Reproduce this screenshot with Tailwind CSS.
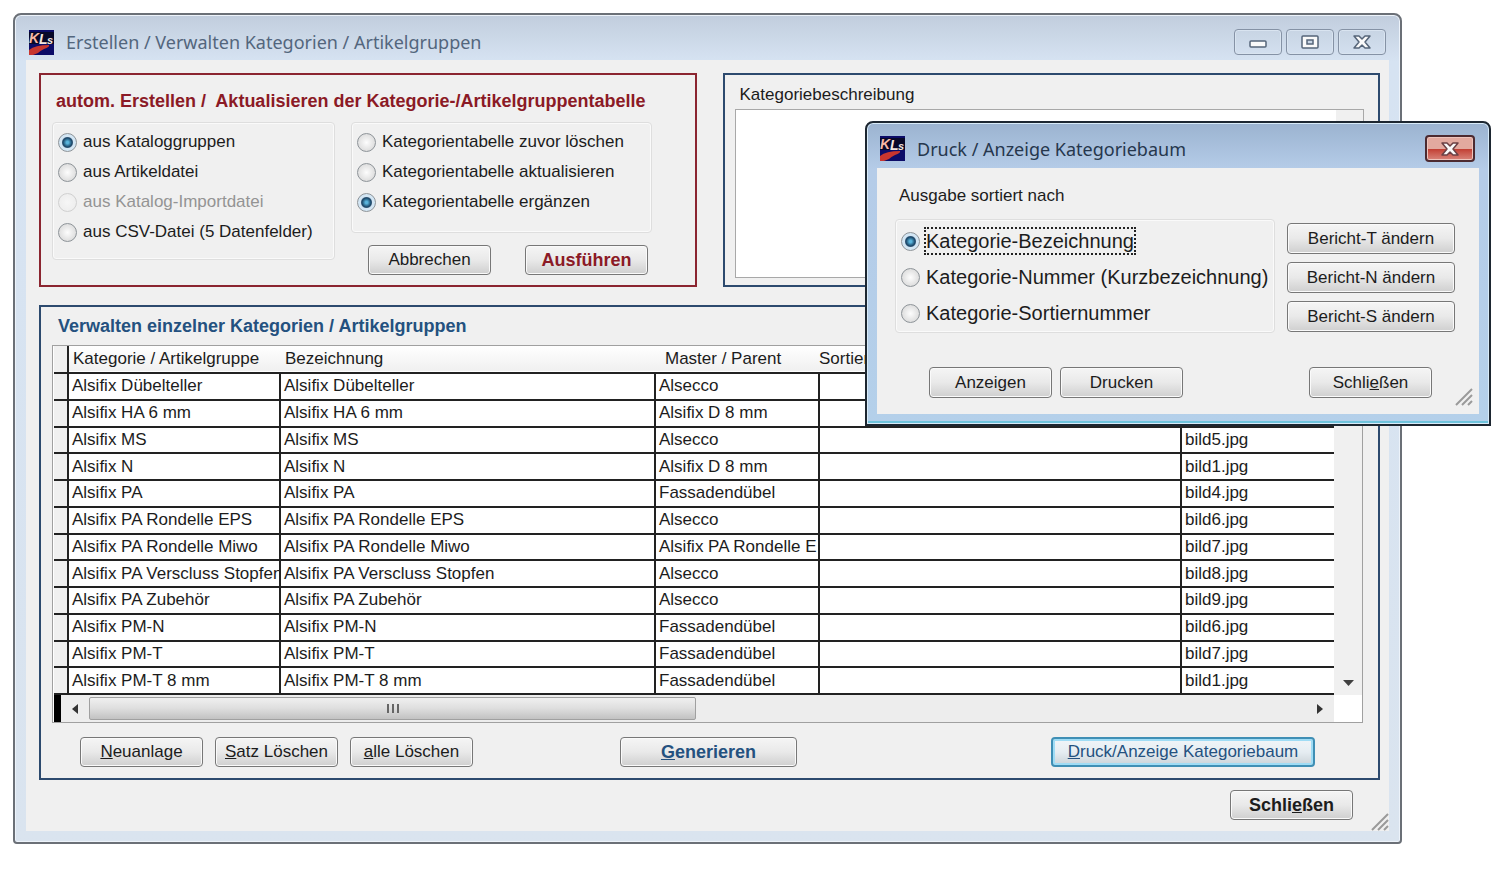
<!DOCTYPE html>
<html lang="de">

<head>
    <meta charset="UTF-8" />
    <meta name="viewport" content="width=device-width, initial-scale=1.0" />
    <title>Erstellen / Verwalten Kategorien / Artikelgruppen</title>
    <script src="https://cdn.jsdelivr.net/npm/@tailwindcss/browser@4"></script>
</head>

<body class="relative min-h-screen bg-white font-['Liberation_Sans',Arial,sans-serif] text-[17px] leading-5 text-[#1c1c1c]">

    <svg class="hidden">
        <symbol id="logo" viewBox="0 0 25 25">
            <rect width="25" height="25" fill="#0c0c68" />
            <path d="M0 2 H25 V14 H0 Z" fill="#080828" />
            <path d="M0 25 V20 Q6 15 20 15 Q21 17 15 19 Q11 21 9 23 L4 25 Z" fill="#c8362f" />
            <text x="0" y="13" font-family="Liberation Sans" font-size="14" font-weight="bold" font-style="italic" fill="#f8b8a4">K</text>
            <text x="10" y="14" font-family="Liberation Sans" font-size="14" font-weight="bold" font-style="italic" fill="#f4e6e0">L</text>
            <text x="18" y="14" font-family="Liberation Sans" font-size="11" font-weight="bold" font-style="italic" fill="#f4e6e0">s</text>
        </symbol>
        <symbol id="cross" viewBox="0 0 20 16">
            <path d="M2 2 H7 L10 5 L13 2 H18 L13 8 L18 14 H13 L10 11 L7 14 H2 L7 8 Z" fill="#fafafa" stroke="currentColor" stroke-width="1.500" stroke-linejoin="round" />
        </symbol>
        <symbol id="grip" viewBox="0 0 18 18">
            <path d="M1 17 L17 1 M7 17 L17 7 M13 17 L17 13" stroke="#9a9a9a" stroke-width="2" />
        </symbol>
    </svg>

    <!-- Main window -->
    <main class="absolute left-[13px] right-[110px] top-[13px] rounded-t-lg rounded-b-sm border-2 border-[#6b7077] bg-linear-to-b from-[#c1cddd] via-[#d6e3f2] via-[46px] to-[#dae4ef] px-[11px] pb-[11px] shadow-[inset_0_0_0_1px_#edf3fa]">
        <header class="flex h-[45px] items-center pt-[9px] font-['Noto_Sans','Open_Sans',sans-serif]">
            <svg class="ml-[3px] h-[25px] w-[25px]"><use href="#logo" /></svg>
            <h1 class="ml-3 grow text-[18px] text-[#53667d]">Erstellen / Verwalten Kategorien / Artikelgruppen</h1>
            <div class="flex gap-1 pr-[3px] text-[#566579]">
                <button aria-label="Minimieren" class="flex h-[26px] w-12 items-center justify-center rounded-sm border border-[#8592a5] shadow-[inset_0_0_0_1px_#d9e4f0]">
                    <svg class="h-4 w-5" viewBox="0 0 20 16"><rect x="2" y="7" width="16" height="6" rx="1" fill="#fafafa" stroke="currentColor" stroke-width="1.500" /></svg>
                </button>
                <button aria-label="Maximieren" class="flex h-[26px] w-12 items-center justify-center rounded-sm border border-[#8592a5] shadow-[inset_0_0_0_1px_#d9e4f0]">
                    <svg class="h-4 w-5" viewBox="0 0 20 16" fill="#fafafa" stroke="currentColor" stroke-width="1.500"><rect x="2" y="2" width="16" height="12" rx="1" /><rect x="7" y="6" width="6" height="4" fill="#c9d6e6" /></svg>
                </button>
                <button aria-label="Schließen" class="flex h-[26px] w-12 items-center justify-center rounded-sm border border-[#8592a5] shadow-[inset_0_0_0_1px_#d9e4f0]">
                    <svg class="h-4 w-5"><use href="#cross" /></svg>
                </button>
            </div>
        </header>

        <div class="relative bg-[#f0f0f0] pb-[11px] pl-[13px] pr-[9px] pt-[13px]">
            <div class="grid grid-cols-2 gap-[26px]">
                <!-- Automatic creation -->
                <section class="h-[214px] border-2 border-[#8b2530] pl-[11px] pt-4">
                    <h2 class="whitespace-pre pl-1 text-[18px] font-bold text-[#8b1a26]">autom. Erstellen /  Aktualisieren der Kategorie-/Artikelgruppentabelle</h2>
                    <div class="mt-[11px] flex gap-4">
                        <fieldset class="flex h-[138px] w-[283px] flex-col gap-[10px] rounded-sm border border-[#dedede] pl-[5px] pt-[9px] shadow-[inset_0_0_0_1px_#fafafa]">
                            <label class="flex items-center gap-[6px]"><input type="radio" name="quelle" checked class="h-[19px] w-[19px] shrink-0 appearance-none rounded-full border border-[#8e9499] bg-radial from-[#fdfdfd] to-[#d2d2d2] checked:from-[#59b4dc] checked:from-10% checked:via-[#163f60] checked:via-40% checked:to-[#d3e6f4] checked:to-50%" />aus Kataloggruppen</label>
                            <label class="flex items-center gap-[6px]"><input type="radio" name="quelle" class="h-[19px] w-[19px] shrink-0 appearance-none rounded-full border border-[#8e9499] bg-radial from-[#fdfdfd] to-[#d2d2d2] checked:from-[#59b4dc] checked:from-10% checked:via-[#163f60] checked:via-40% checked:to-[#d3e6f4] checked:to-50%" />aus Artikeldatei</label>
                            <label class="flex items-center gap-[6px] text-[#949494]"><input type="radio" name="quelle" disabled class="h-[19px] w-[19px] shrink-0 appearance-none rounded-full border border-[#d0d0d0] bg-radial from-[#f6f6f6] to-[#ebebeb]" />aus Katalog-Importdatei</label>
                            <label class="flex items-center gap-[6px]"><input type="radio" name="quelle" class="h-[19px] w-[19px] shrink-0 appearance-none rounded-full border border-[#8e9499] bg-radial from-[#fdfdfd] to-[#d2d2d2] checked:from-[#59b4dc] checked:from-10% checked:via-[#163f60] checked:via-40% checked:to-[#d3e6f4] checked:to-50%" />aus CSV-Datei (5 Datenfelder)</label>
                        </fieldset>
                        <div>
                            <fieldset class="flex h-[111px] w-[301px] flex-col gap-[10px] rounded-sm border border-[#dedede] pl-[5px] pt-[9px] shadow-[inset_0_0_0_1px_#fafafa]">
                                <label class="flex items-center gap-[6px]"><input type="radio" name="modus" class="h-[19px] w-[19px] shrink-0 appearance-none rounded-full border border-[#8e9499] bg-radial from-[#fdfdfd] to-[#d2d2d2] checked:from-[#59b4dc] checked:from-10% checked:via-[#163f60] checked:via-40% checked:to-[#d3e6f4] checked:to-50%" />Kategorientabelle zuvor löschen</label>
                                <label class="flex items-center gap-[6px]"><input type="radio" name="modus" class="h-[19px] w-[19px] shrink-0 appearance-none rounded-full border border-[#8e9499] bg-radial from-[#fdfdfd] to-[#d2d2d2] checked:from-[#59b4dc] checked:from-10% checked:via-[#163f60] checked:via-40% checked:to-[#d3e6f4] checked:to-50%" />Kategorientabelle aktualisieren</label>
                                <label class="flex items-center gap-[6px]"><input type="radio" name="modus" checked class="h-[19px] w-[19px] shrink-0 appearance-none rounded-full border border-[#8e9499] bg-radial from-[#fdfdfd] to-[#d2d2d2] checked:from-[#59b4dc] checked:from-10% checked:via-[#163f60] checked:via-40% checked:to-[#d3e6f4] checked:to-50%" />Kategorientabelle ergänzen</label>
                            </fieldset>
                            <div class="mt-3 flex justify-between pl-[17px] pr-1">
                                <button class="h-[30px] w-[123px] rounded-sm border border-[#777] bg-linear-to-b from-[#f5f5f5] via-[#e9e9e9] via-50% to-[#cfcfcf] shadow-[inset_0_0_0_1px_#fafafa]">Abbrechen</button>
                                <button class="h-[30px] w-[123px] rounded-sm border border-[#777] bg-linear-to-b from-[#f5f5f5] via-[#e9e9e9] via-50% to-[#cfcfcf] text-[18px] font-bold text-[#8b1a26] shadow-[inset_0_0_0_1px_#fafafa]">Ausführen</button>
                            </div>
                        </div>
                    </div>
                </section>

                <!-- Description -->
                <section class="flex h-[214px] flex-col border-2 border-[#2d4a6e] pb-[7px] pl-[10px] pr-[14px] pt-[10px]">
                    <label for="beschreibung" class="mb-1 pl-[5px]">Kategoriebeschreibung</label>
                    <div class="flex grow border border-[#a8a8a8] bg-white">
                        <textarea id="beschreibung" class="grow resize-none outline-none"></textarea>
                        <div class="w-[27px] bg-[#f0f0f0]"></div>
                    </div>
                </section>
            </div>

            <!-- Category list -->
            <section class="mt-[18px] border-2 border-[#2d4a6e] pb-[11px] pl-[11px] pr-[15px] pt-[9px]">
                <h2 class="mb-[9px] pl-[6px] text-[18px] font-bold text-[#24517f]">Verwalten einzelner Kategorien / Artikelgruppen</h2>
                <div class="border border-[#a0a0a0] bg-white pl-px">
                    <div class="flex">
                        <div class="min-w-0 grow">
                            <table class="h-[349px] w-full table-fixed border-collapse text-left">
                                <colgroup>
                                    <col class="w-[14px]" />
                                    <col class="w-[212px]" />
                                    <col class="w-[375px]" />
                                    <col class="w-[164px]" />
                                    <col />
                                    <col class="w-[153px]" />
                                </colgroup>
                                <thead>
                                    <tr class="h-[27px] border-b-2 border-[#222] bg-linear-to-b from-white to-[#f0f0f0]">
                                        <th class="border-r-2 border-[#222] bg-[#f0f0f0] p-0"></th>
                                        <th class="p-0 pl-1 font-normal">Kategorie / Artikelgruppe</th>
                                        <th class="p-0 pl-[5px] font-normal">Bezeichnung</th>
                                        <th class="p-0 pl-[10px] font-normal">Master / Parent</th>
                                        <th class="p-0 font-normal">Sortiernummer</th>
                                        <th class="p-0 pl-1 font-normal">Bild</th>
                                    </tr>
                                </thead>
                                <tbody id="rows"></tbody>
                            </table>
                        </div>
                        <div class="flex w-[28px] shrink-0 flex-col justify-end bg-[#f0f0f0]">
                            <button aria-label="Nach unten" class="flex h-[24px] items-center justify-center"><svg class="h-[6px] w-[11px]" viewBox="0 0 11 6"><path d="M0 0 H11 L5.500 6 Z" fill="#404040" /></svg></button>
                        </div>
                    </div>
                    <div class="flex h-[27px] items-center bg-[#ededed]">
                        <div class="h-full w-[7px] bg-black"></div>
                        <button aria-label="Nach links" class="flex h-full w-[28px] items-center justify-center"><svg class="h-[10px] w-[6px]" viewBox="0 0 6 10"><path d="M6 0 V10 L0 5 Z" fill="#333" /></svg></button>
                        <div class="flex h-[23px] w-[607px] items-center justify-center gap-[3px] rounded-xs border border-[#a0a0a0] bg-linear-to-b from-[#f0f0f0] via-[#dedede] to-[#c2c2c2]">
                            <i class="h-[9px] w-[2px] bg-[#666]"></i><i class="h-[9px] w-[2px] bg-[#666]"></i><i class="h-[9px] w-[2px] bg-[#666]"></i>
                        </div>
                        <div class="grow"></div>
                        <button aria-label="Nach rechts" class="flex h-full w-[28px] items-center justify-center"><svg class="h-[10px] w-[6px]" viewBox="0 0 6 10"><path d="M0 0 V10 L6 5 Z" fill="#333" /></svg></button>
                        <div class="h-full w-[28px] bg-white"></div>
                    </div>
                </div>
                <div class="mt-[14px] flex items-center pl-7 pr-12">
                    <div class="flex gap-3">
                        <button class="h-[30px] w-[123px] rounded-sm border border-[#777] bg-linear-to-b from-[#f5f5f5] via-[#e9e9e9] via-50% to-[#cfcfcf] shadow-[inset_0_0_0_1px_#fafafa]"><u>N</u>euanlage</button>
                        <button class="h-[30px] w-[123px] rounded-sm border border-[#777] bg-linear-to-b from-[#f5f5f5] via-[#e9e9e9] via-50% to-[#cfcfcf] shadow-[inset_0_0_0_1px_#fafafa]"><u>S</u>atz Löschen</button>
                        <button class="h-[30px] w-[123px] rounded-sm border border-[#777] bg-linear-to-b from-[#f5f5f5] via-[#e9e9e9] via-50% to-[#cfcfcf] shadow-[inset_0_0_0_1px_#fafafa]"><u>a</u>lle Löschen</button>
                    </div>
                    <button class="ml-[147px] h-[30px] w-[177px] rounded-sm border border-[#777] bg-linear-to-b from-[#f5f5f5] via-[#e9e9e9] via-50% to-[#cfcfcf] text-[18px] font-bold text-[#24517f] shadow-[inset_0_0_0_1px_#fafafa]"><u>G</u>enerieren</button>
                    <button class="ml-auto h-[30px] w-[264px] rounded-sm border-2 border-[#3f8fb5] bg-linear-to-b from-[#f0f5f8] via-[#e6edf2] via-50% to-[#cbd3d8] text-[#24517f] shadow-[inset_0_0_0_2px_#9fdcf5]"><u>D</u>ruck/Anzeige Kategoriebaum</button>
                </div>
            </section>

            <div class="mt-[10px] flex justify-end pr-[27px]">
                <button class="h-[30px] w-[123px] rounded-sm border border-[#777] bg-linear-to-b from-[#f5f5f5] via-[#e9e9e9] via-50% to-[#cfcfcf] text-[18px] font-bold shadow-[inset_0_0_0_1px_#fafafa]">Schli<u>e</u>ßen</button>
            </div>
            <svg class="absolute bottom-0 right-0 h-[18px] w-[18px]"><use href="#grip" /></svg>
        </div>
    </main>

    <!-- Print dialog -->
    <div role="dialog" aria-labelledby="dialog-title" class="absolute right-[21px] top-[121px] w-[626px] rounded-t-lg border-2 border-[#1d2731] bg-linear-to-b from-[#9bb3d0] via-[#b5cce8] via-[46px] to-[#b4d0ea] px-[10px] pb-[10px] shadow-[inset_0_0_0_1px_#d8ebf8,inset_0_-3px_0_#6fc3dc]">
        <header class="flex h-[45px] items-center pt-[6px] font-['Noto_Sans','Open_Sans',sans-serif]">
            <svg class="ml-[3px] h-[25px] w-[25px]"><use href="#logo" /></svg>
            <h2 id="dialog-title" class="ml-3 grow text-[18px] text-[#26374d]">Druck / Anzeige Kategoriebaum</h2>
            <button aria-label="Schließen" class="mr-1 flex h-[27px] w-[50px] items-center justify-center rounded-sm border-2 border-[#4c2a30] bg-linear-to-b from-[#e2a99f] from-50% via-[#c0392f] via-50% to-[#d8837a] text-[#6b4044] shadow-[inset_0_0_0_1px_#eec4bc]">
                <svg class="h-4 w-5"><use href="#cross" /></svg>
            </button>
        </header>
        <div class="relative bg-[#f0f0f0] pb-4 pl-[18px] pr-[24px] pt-[18px]">
            <p class="pl-1">Ausgabe sortiert nach</p>
            <div class="mt-[13px] flex justify-between">
                <fieldset class="flex h-[114px] w-[380px] flex-col gap-2 rounded-sm border border-[#dedede] pl-[5px] pt-[7px] text-[20px] leading-7 shadow-[inset_0_0_0_1px_#fafafa]">
                    <label class="flex items-center gap-1"><input type="radio" name="sortierung" checked class="h-[19px] w-[19px] shrink-0 appearance-none rounded-full border border-[#8e9499] bg-radial from-[#fdfdfd] to-[#d2d2d2] checked:from-[#59b4dc] checked:from-10% checked:via-[#163f60] checked:via-40% checked:to-[#d3e6f4] checked:to-50%" /><span class="border-2 border-dotted border-[#222] leading-6">Kategorie-Bezeichnung</span></label>
                    <label class="flex items-center gap-[6px]"><input type="radio" name="sortierung" class="h-[19px] w-[19px] shrink-0 appearance-none rounded-full border border-[#8e9499] bg-radial from-[#fdfdfd] to-[#d2d2d2] checked:from-[#59b4dc] checked:from-10% checked:via-[#163f60] checked:via-40% checked:to-[#d3e6f4] checked:to-50%" />Kategorie-Nummer (Kurzbezeichnung)</label>
                    <label class="flex items-center gap-[6px]"><input type="radio" name="sortierung" class="h-[19px] w-[19px] shrink-0 appearance-none rounded-full border border-[#8e9499] bg-radial from-[#fdfdfd] to-[#d2d2d2] checked:from-[#59b4dc] checked:from-10% checked:via-[#163f60] checked:via-40% checked:to-[#d3e6f4] checked:to-50%" />Kategorie-Sortiernummer</label>
                </fieldset>
                <div class="flex flex-col gap-2 pt-1">
                    <button class="h-[31px] w-[168px] rounded-sm border border-[#777] bg-linear-to-b from-[#f5f5f5] via-[#e9e9e9] via-50% to-[#cfcfcf] shadow-[inset_0_0_0_1px_#fafafa]">Bericht-T ändern</button>
                    <button class="h-[31px] w-[168px] rounded-sm border border-[#777] bg-linear-to-b from-[#f5f5f5] via-[#e9e9e9] via-50% to-[#cfcfcf] shadow-[inset_0_0_0_1px_#fafafa]">Bericht-N ändern</button>
                    <button class="h-[31px] w-[168px] rounded-sm border border-[#777] bg-linear-to-b from-[#f5f5f5] via-[#e9e9e9] via-50% to-[#cfcfcf] shadow-[inset_0_0_0_1px_#fafafa]">Bericht-S ändern</button>
                </div>
            </div>
            <div class="mt-[34px] flex gap-2 pl-[34px] pr-[23px]">
                <button class="h-[31px] w-[123px] rounded-sm border border-[#777] bg-linear-to-b from-[#f5f5f5] via-[#e9e9e9] via-50% to-[#cfcfcf] shadow-[inset_0_0_0_1px_#fafafa]">Anzeigen</button>
                <button class="h-[31px] w-[123px] rounded-sm border border-[#777] bg-linear-to-b from-[#f5f5f5] via-[#e9e9e9] via-50% to-[#cfcfcf] shadow-[inset_0_0_0_1px_#fafafa]">Drucken</button>
                <button class="ml-auto h-[31px] w-[123px] rounded-sm border border-[#777] bg-linear-to-b from-[#f5f5f5] via-[#e9e9e9] via-50% to-[#cfcfcf] shadow-[inset_0_0_0_1px_#fafafa]">Schli<u>e</u>ßen</button>
            </div>
            <svg class="absolute bottom-2 right-[6px] h-[18px] w-[18px]"><use href="#grip" /></svg>
        </div>
    </div>

    <script>
        const rows = [
            ["Alsifix Dübelteller", "Alsecco", ""],
            ["Alsifix HA 6 mm", "Alsifix D 8 mm", ""],
            ["Alsifix MS", "Alsecco", "bild5.jpg"],
            ["Alsifix N", "Alsifix D 8 mm", "bild1.jpg"],
            ["Alsifix PA", "Fassadendübel", "bild4.jpg"],
            ["Alsifix PA Rondelle EPS", "Alsecco", "bild6.jpg"],
            ["Alsifix PA Rondelle Miwo", "Alsifix PA Rondelle E", "bild7.jpg"],
            ["Alsifix PA Verscluss Stopfen", "Alsecco", "bild8.jpg"],
            ["Alsifix PA Zubehör", "Alsecco", "bild9.jpg"],
            ["Alsifix PM-N", "Fassadendübel", "bild6.jpg"],
            ["Alsifix PM-T", "Fassadendübel", "bild7.jpg"],
            ["Alsifix PM-T 8 mm", "Fassadendübel", "bild1.jpg"]
        ];

        const cell = 'overflow-hidden whitespace-nowrap border-r-2 border-[#222] p-0 pl-[3px]';

        document.getElementById('rows').innerHTML = rows.map(([name, parent, bild]) => `
            <tr class="border-b-2 border-[#222]">
                <td class="border-r-2 border-[#222] bg-[#f0f0f0] p-0"></td>
                <td class="${cell}">${name}</td>
                <td class="${cell}">${name}</td>
                <td class="${cell}">${parent}</td>
                <td class="${cell}"></td>
                <td class="overflow-hidden whitespace-nowrap p-0 pl-[3px]">${bild}</td>
            </tr>`).join('');
    </script>
</body>

</html>
